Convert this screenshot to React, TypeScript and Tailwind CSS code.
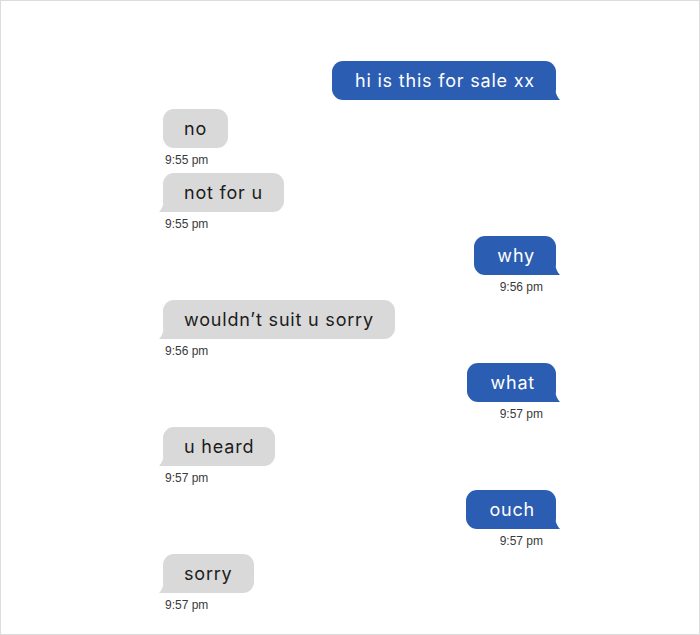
type Msg = {
  text: string;
  mine: boolean;
  time?: string;
  tail?: boolean;
};

const messages: Msg[] = [
  { text: "hi is this for sale xx", mine: true, tail: true },
  { text: "no", mine: false, time: "9:55 pm" },
  { text: "not for u", mine: false, time: "9:55 pm", tail: true },
  { text: "why", mine: true, time: "9:56 pm", tail: true },
  { text: "wouldn\u2019t suit u sorry", mine: false, time: "9:56 pm", tail: true },
  { text: "what", mine: true, time: "9:57 pm", tail: true },
  { text: "u heard", mine: false, time: "9:57 pm", tail: true },
  { text: "ouch", mine: true, time: "9:57 pm", tail: true },
  { text: "sorry", mine: false, time: "9:57 pm", tail: true },
];

function Tail({ mine }: { mine: boolean }) {
  if (mine) {
    return (
      <svg
        className="absolute -right-[4px] bottom-0"
        width="14"
        height="14"
        viewBox="0 0 14 14"
      >
        <path d="M0 0 H8 Q10 10 14 14 H0 Z" fill="#2b5db2" />
      </svg>
    );
  }
  return (
    <svg
      className="absolute -left-[4px] bottom-0"
      width="14"
      height="14"
      viewBox="0 0 14 14"
    >
      <path d="M14 0 H6 Q4 10 0 14 H14 Z" fill="#d9d9d9" />
    </svg>
  );
}

function Bubble({ m }: { m: Msg }) {
  return (
    <div className={m.mine ? "flex flex-col items-end" : "flex flex-col items-start"}>
      <div
        className={
          m.mine
            ? "relative flex h-[39px] items-center rounded-[11px] bg-[#2b5db2] pl-[23px] pr-[21px] text-[18px] text-white"
            : "relative flex h-[39px] items-center rounded-[11px] bg-[#d9d9d9] px-[21px] text-[18px] text-[#1c1c1c]"
        }
      >
        {m.tail && <Tail mine={m.mine} />}
        <span className="relative tracking-[0.8px]">{m.text}</span>
      </div>
      {m.time ? (
        <div
          className={
            m.mine
              ? "h-[24.5px] pr-[13px] pt-[5px] text-[12px] leading-[14px] text-[#3a3a3a]"
              : "h-[24.5px] pl-[2px] pt-[5px] text-[12px] leading-[14px] text-[#3a3a3a]"
          }
          style={{ fontFamily: "'Liberation Sans', Arial, sans-serif" }}
        >
          {m.time}
        </div>
      ) : (
        <div className="h-[9px]" />
      )}
    </div>
  );
}

export default function App() {
  return (
    <div
      className="h-[635px] w-[700px] border border-[#dcdcdc] bg-white"
      style={{ fontFamily: "Inter, 'Noto Sans', sans-serif" }}
    >
      <div className="flex flex-col pl-[162px] pr-[143px] pt-[60px]">
        {messages.map((m, i) => (
          <Bubble key={i} m={m} />
        ))}
      </div>
    </div>
  );
}
